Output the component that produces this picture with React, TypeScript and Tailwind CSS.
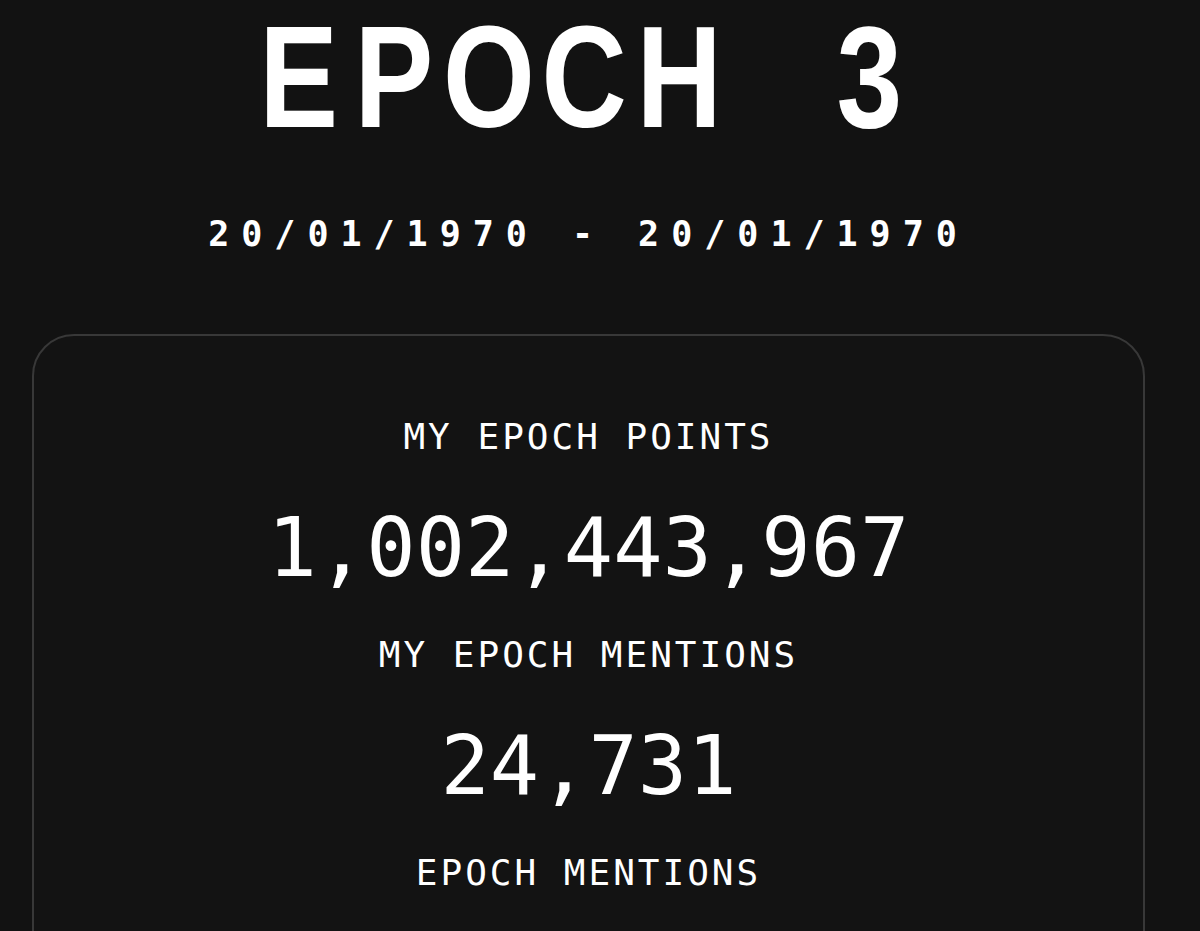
const mono = "font-['DejaVu_Sans_Mono','Liberation_Mono',monospace]"

const stats = [
  { label: 'MY EPOCH POINTS', value: 1002443967 },
  { label: 'MY EPOCH MENTIONS', value: 24731 },
  { label: 'EPOCH MENTIONS', value: null },
]

/**
 * 에폭 제목: 글자마다 같은 폭의 칸에 넣고 가로로 좁혀 고정폭 좁은 글꼴처럼 보이게 한다
 */
function EpochTitle({ text }: { text: string }) {
  return (
    <h1 className="flex scale-x-[0.82] pt-[6px] pr-[12px] font-['Liberation_Sans','Arial',sans-serif] text-[144px] font-bold leading-none">
      {text.split('').map((ch, i) => (
        <span key={i} className="w-[116px] text-center whitespace-pre">
          {ch}
        </span>
      ))}
    </h1>
  )
}

function StatBlock({ label, value }: { label: string; value: number | null }) {
  return (
    <div className="flex flex-col items-center">
      <p className="text-[36px] leading-[48px] tracking-[3px]">{label}</p>
      {value !== null && (
        <p className="mt-[37px] text-[82px] leading-[100px]">{value.toLocaleString('en-US')}</p>
      )}
    </div>
  )
}

export default function App() {
  return (
    <div className="h-[931px] overflow-hidden bg-[#121212] text-white">
      <div className="flex w-[1177px] flex-col items-center px-8">
        <EpochTitle text="EPOCH 3" />

        {/* 기간 */}
        <p className={`${mono} mt-[64px] text-[35px] font-bold leading-[40px] tracking-[12px]`}>
          20/01/1970 - 20/01/1970
        </p>

        {/* 통계 카드 */}
        <section className={`${mono} mt-[80px] flex w-full flex-col gap-[33px] rounded-[42px] border-2 border-[#383838] bg-[#131313] pt-[77px] pb-[80px]`}>
          {stats.map(s => (
            <StatBlock key={s.label} label={s.label} value={s.value} />
          ))}
        </section>
      </div>
    </div>
  )
}
